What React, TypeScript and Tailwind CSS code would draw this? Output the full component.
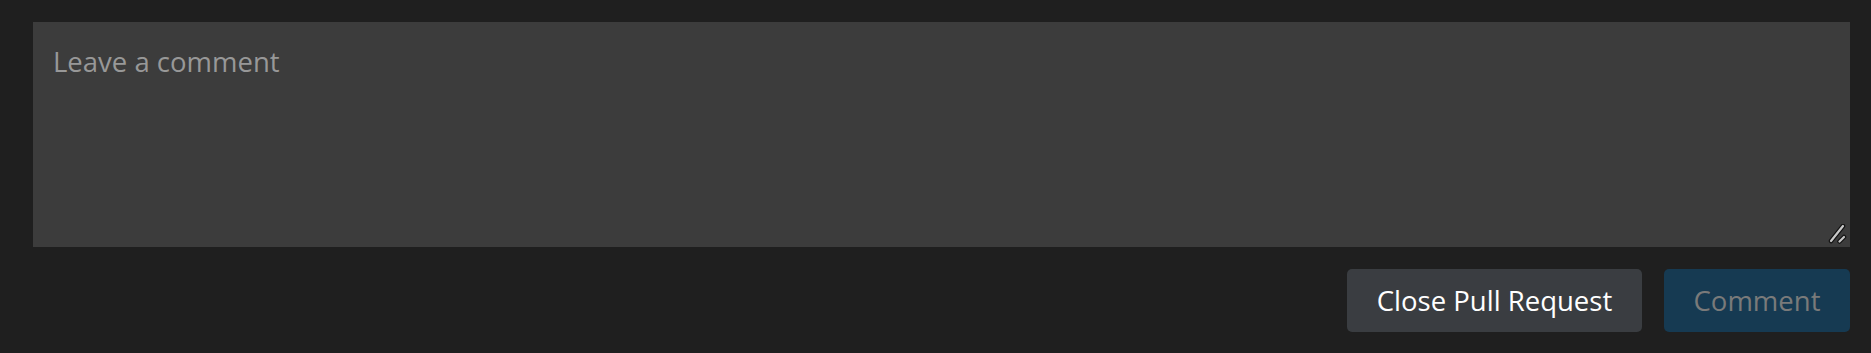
export default function App() {
  return (
    <div
      className="w-[1871px] h-[353px] bg-[#1f1f1f] pl-[33px] pr-[21px] pt-[22px]"
      style={{ fontFamily: '"Open Sans", "Noto Sans", sans-serif' }}
    >
      <div className="relative">
        <textarea
          placeholder="Leave a comment"
          className="block w-full h-[225px] bg-[#3c3c3c] text-[#cccccc] placeholder:text-[#989898] text-[27.5px] leading-[36px] px-[20px] pt-[22px] outline-none resize-none"
          style={{ fontFamily: '"Open Sans", "Noto Sans", sans-serif' }}
        />
        <svg
          className="absolute right-[2px] bottom-[3px] pointer-events-none"
          width="20"
          height="20"
          viewBox="0 0 20 20"
        >
          <g strokeLinecap="round">
            <line x1="3" y1="17" x2="15" y2="2" stroke="#111" strokeWidth="4.5" />
            <line x1="11.5" y1="17.5" x2="16" y2="13" stroke="#111" strokeWidth="4.5" />
            <line x1="3" y1="17" x2="15" y2="2" stroke="#c8c8c8" strokeWidth="2.2" />
            <line x1="11.5" y1="17.5" x2="16" y2="13" stroke="#c8c8c8" strokeWidth="2.2" />
          </g>
        </svg>
      </div>
      <div className="flex justify-end gap-[22px] mt-[22px]">
        <button className="h-[63px] w-[295px] rounded-[5px] bg-[#3a3d41] text-white text-[27.5px]">
          Close Pull Request
        </button>
        <button className="h-[63px] w-[186px] rounded-[5px] bg-[#163a52] text-[#7a7a7a] text-[27.5px]">
          Comment
        </button>
      </div>
    </div>
  );
}
